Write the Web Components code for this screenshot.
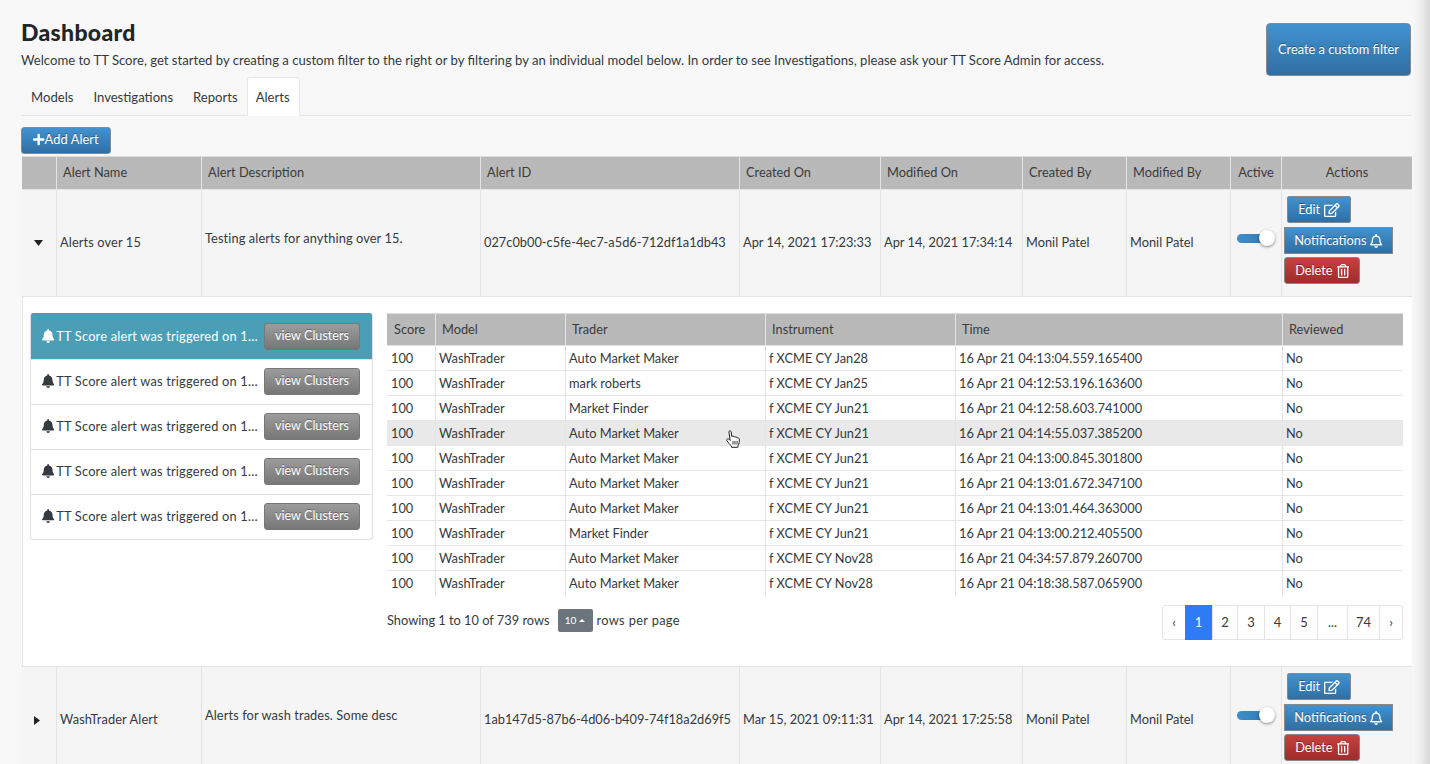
<!DOCTYPE html>
<html><head><meta charset="utf-8">
<style>
html,body{margin:0;padding:0;height:100%;overflow:hidden;background:#f8f8f8}
body{font:12.8px/1.25 Lato,"Open Sans",sans-serif;color:#343a40}
</style></head>
<body>
<tt-page id="page">
  <tt-header>
    <span slot="title">Dashboard</span>
    <span slot="lead">Welcome to TT Score, get started by creating a custom filter to the right or by filtering by an individual model below. In order to see Investigations, please ask your TT Score Admin for access.</span>
    <tt-button slot="action" size="lg">Create a custom filter</tt-button>
  </tt-header>
  <tt-tabs active="Alerts" items="Models,Investigations,Reports,Alerts"></tt-tabs>
  <tt-toolbar><tt-button size="add"><tt-icon name="plus"></tt-icon>Add Alert</tt-button></tt-toolbar>
  <tt-alert-head></tt-alert-head>
  <tt-alert-row open name="Alerts over 15" desc="Testing alerts for anything over 15." aid="027c0b00-c5fe-4ec7-a5d6-712df1a1db43" created="Apr 14, 2021 17:23:33" modified="Apr 14, 2021 17:34:14" by="Monil Patel" mby="Monil Patel"></tt-alert-row>
  <tt-detail>
    <tt-alert-list slot="list"></tt-alert-list>
    <tt-data-table slot="table"></tt-data-table>
    <tt-table-foot slot="foot"></tt-table-foot>
  </tt-detail>
  <tt-alert-row name="WashTrader Alert" desc="Alerts for wash trades. Some desc" aid="1ab147d5-87b6-4d06-b409-74f18a2d69f5" created="Mar 15, 2021 09:11:31" modified="Apr 14, 2021 17:25:58" by="Monil Patel" mby="Monil Patel"></tt-alert-row>
  <tt-cursor></tt-cursor>
</tt-page>
<script>
const ICONS={
 bell:['0 0 448 512','M224 512c35.32 0 63.97-28.65 63.97-64H160.03c0 35.35 28.65 64 63.97 64zm215.39-149.71c-19.32-20.76-55.47-51.99-55.47-154.29 0-77.7-54.48-139.9-127.94-155.16V32c0-17.67-14.32-32-31.98-32s-31.98 14.33-31.98 32v20.84C118.56 68.1 64.08 130.3 64.08 208c0 102.3-36.15 133.53-55.47 154.29-6 6.45-8.66 14.16-8.61 21.71.11 16.4 12.98 32 32.1 32h383.8c19.12 0 32-15.6 32.1-32 .05-7.55-2.61-15.27-8.61-21.71z'],
 bello:['0 0 448 512','M439.39 362.29c-19.32-20.76-55.47-51.99-55.47-154.29 0-77.7-54.48-139.9-127.94-155.16V32c0-17.67-14.32-32-31.98-32s-31.98 14.33-31.98 32v20.84C118.56 68.1 64.08 130.3 64.08 208c0 102.3-36.15 133.53-55.47 154.29-6 6.45-8.66 14.16-8.61 21.71.11 16.4 12.98 32 32.1 32h383.8c19.12 0 32-15.6 32.1-32 .05-7.55-2.61-15.27-8.61-21.71zM67.53 368c21.22-27.97 44.42-74.33 44.53-159.42 0-.2-.06-.38-.06-.58 0-61.86 50.14-112 112-112s112 50.14 112 112c0 .2-.06.38-.06.58.11 85.1 23.31 131.46 44.53 159.42H67.53zM224 512c35.32 0 63.97-28.65 63.97-64H160.03c0 35.35 28.65 64 63.97 64z'],
 edit:['0 0 576 512','M402.3 344.9l32-32c5-5 13.7-1.5 13.7 5.7V464c0 26.5-21.5 48-48 48H48c-26.5 0-48-21.5-48-48V112c0-26.5 21.5-48 48-48h273.5c7.1 0 10.7 8.6 5.7 13.7l-32 32c-1.5 1.5-3.5 2.3-5.7 2.3H48v352h352V350.5c0-2.1.8-4.1 2.3-5.6zm156.6-201.8L296.3 405.7l-90.4 10c-26.2 2.9-48.5-19.2-45.6-45.6l10-90.4L432.9 17.1c22.9-22.9 59.9-22.9 82.7 0l43.2 43.2c22.9 22.9 22.9 60 .1 82.8zM460.1 174L402 115.9 216.2 301.8l-7.3 65.3 65.3-7.3L460.1 174zm64.8-79.7l-43.2-43.2c-4.1-4.1-10.8-4.1-14.8 0L436 82l58.1 58.1 30.9-30.9c4-4.2 4-10.8-.1-14.9z'],
 trash:['0 0 448 512','M268 416h24a12 12 0 0 0 12-12V188a12 12 0 0 0-12-12h-24a12 12 0 0 0-12 12v216a12 12 0 0 0 12 12zM432 80h-82.41l-34-56.7A48 48 0 0 0 274.41 0H173.59a48 48 0 0 0-41.16 23.3L98.41 80H16A16 16 0 0 0 0 96v16a16 16 0 0 0 16 16h16v336a48 48 0 0 0 48 48h288a48 48 0 0 0 48-48V128h16a16 16 0 0 0 16-16V96a16 16 0 0 0-16-16zM171.84 50.91A6 6 0 0 1 177 48h94a6 6 0 0 1 5.15 2.91L293.61 80H154.39zM368 464H80V128h288zm-212-48h24a12 12 0 0 0 12-12V188a12 12 0 0 0-12-12h-24a12 12 0 0 0-12 12v216a12 12 0 0 0 12 12z'],
 plus:['0 0 448 512','M416 208H272V64c0-17.67-14.33-32-32-32h-32c-17.67 0-32 14.33-32 32v144H32c-17.67 0-32 14.33-32 32v32c0 17.67 14.33 32 32 32h144v144c0 17.67 14.33 32 32 32h32c17.67 0 32-14.33 32-32V304h144c17.67 0 32-14.33 32-32v-32c0-17.67-14.33-32-32-32z']
};
const FONT=`Lato,"Open Sans",sans-serif`;
function def(name,html,init){
  customElements.define(name,class extends HTMLElement{
    connectedCallback(){
      if(this.shadowRoot)return;
      const r=this.attachShadow({mode:'open'});
      r.innerHTML=typeof html==='function'?html(this):html;
      if(init)init(this,r);
    }
  });
}
def('tt-icon',h=>{const i=ICONS[h.getAttribute('name')];return `<style>:host{display:inline-flex;vertical-align:-2px}svg{display:block;height:var(--icon-h,14px);width:auto;fill:currentColor}</style><svg viewBox="${i[0]}"><path d="${i[1]}"/></svg>`});
def('tt-page',`<style>
:host{display:flex;height:764px;overflow:hidden;position:relative}
.main{width:1412px;flex:none;box-sizing:border-box;padding:0 0 0 21px;--cols:34px 145px 279px 259px 141px 142px 104px 104px 51px 131px}
.bar{flex:none;width:18px;height:100%;background:linear-gradient(90deg,#f8f8f8 0,#eeeeee 45%,#d8d8d8 100%)}
</style><div class="main"><slot></slot></div><div class="bar"></div>`);
def('tt-header',`<style>
:host{display:flex;justify-content:space-between;height:77px;box-sizing:border-box;padding-right:1px}
h1{margin:0;padding-top:19px;font-size:23px;line-height:27px;font-weight:900;color:#212529;letter-spacing:.3px}
p{margin:0;padding-top:4px;font-size:13.1px;line-height:20px;color:#343a40}
.a{padding-top:23px}
</style><div><h1><slot name="title"></slot></h1><p><slot name="lead"></slot></p></div><div class="a"><slot name="action"></slot></div>`);
def('tt-button',h=>`<style>
:host{display:inline-flex;align-items:center;justify-content:center;box-sizing:border-box;color:#fff;font:12.8px/1 ${FONT};text-shadow:0 -1px 0 rgba(0,0,0,.35);white-space:nowrap;border:1px solid #85888c;border-radius:3px;background:linear-gradient(#4292d0,#2f6fa3);gap:4px;--icon-h:14px}
:host([size=lg]){width:145px;height:53px;border-radius:4px}
:host([size=add]){width:90px;height:27px;gap:0;--icon-h:13px;border-radius:3px;padding-bottom:2px;letter-spacing:.1px}
:host([size=edit]){width:64px;height:27px;margin-left:3px;border-radius:2px}
:host([size=notif]){width:109px;height:27px;border-radius:0;margin-top:1px}
:host([size=del]){width:76px;height:27px;background:linear-gradient(#c5413e,#a12c2a)}
:host([size=view]){flex:none;width:96px;height:27px;background:linear-gradient(#9c9c9c,#777);border-color:#777;border-radius:3px;font-size:12.6px}
</style><slot></slot>`);
def('tt-tabs',h=>{
 const a=h.getAttribute('active');
 return `<style>
:host{display:flex;height:39px;box-sizing:border-box;border-bottom:1px solid #e4e4e4}
a{box-sizing:border-box;height:39px;padding:12px 10px 0;font-size:13.1px;line-height:17px;color:#343a40}
a.on{background:#fff;border:1px solid #e8e8e8;border-bottom:0;border-radius:3px 3px 0 0;padding:11px 8px 0;width:53px;margin-left:-1px}
</style>`+h.getAttribute('items').split(',').map(t=>`<a class="${t===a?'on':''}">${t}</a>`).join('');
});
def('tt-toolbar',`<style>:host{display:flex;padding-top:11px;height:40px;box-sizing:border-box}</style><slot></slot>`);
const CELL=`:host{display:grid;grid-template-columns:var(--cols);margin-left:1px;width:1390px;box-sizing:border-box}`;
def('tt-alert-head',`<style>${CELL}
:host{height:34px;background:#b9b9b9;border-top:1px solid #ddd;border-bottom:1px solid #e2e2e8;font-size:12.8px;color:#3b3b3b}
div{border-left:1px solid #e3e3e8;padding:7px 0 0 6px;line-height:17px;box-sizing:border-box}
div:first-of-type{border-left:0}
.c{padding-left:0;text-align:center}
</style><div></div><div>Alert Name</div><div>Alert Description</div><div>Alert ID</div><div>Created On</div><div>Modified On</div><div>Created By</div><div>Modified By</div><div class="c">Active</div><div class="c">Actions</div>`);
def('tt-toggle',`<style>:host{display:block;position:relative;width:39px;height:17px}
.t{position:absolute;left:0;top:4px;width:34px;height:9px;border-radius:5px;background:linear-gradient(90deg,#3f8fcb,#2f75ad)}
.k{position:absolute;left:22px;top:0;width:16px;height:16px;border-radius:50%;background:#fff;box-shadow:0 1px 3px rgba(0,0,0,.45)}
</style><div class="t"></div><div class="k"></div>`);
def('tt-alert-row',h=>{
 const g=n=>h.getAttribute(n), open=h.hasAttribute('open');
 const caret=open?`<svg width="9" height="6" viewBox="0 0 9 6"><path d="M0 0h9L4.500 6z" fill="#222"/></svg>`:`<svg width="6" height="9" viewBox="0 0 6 9"><path d="M0 0v9l6-4.500z" fill="#222"/></svg>`;
 return `<style>${CELL}
:host{height:107px;background:#f5f5f5;border-bottom:1px solid #e4e4ea;font-size:12.8px;color:#343a40}
.c{border-left:1px solid #e3e3e8;padding:0 0 2px 3px;display:flex;align-items:center;white-space:nowrap;box-sizing:border-box;min-width:0}
.c:first-of-type{border-left:0;padding:0 0 0 12px}
.n{letter-spacing:.12px}
.d{padding-left:3px;padding-bottom:10px;letter-spacing:.1px}
.tg{padding:0 0 10px 6px}
.ac{display:flex;flex-direction:column;align-items:flex-start;gap:3px;padding:6px 0 0 2px;justify-content:flex-start}
</style>
<div class="c">${caret}</div><div class="c n">${g('name')}</div><div class="c d">${g('desc')}</div><div class="c">${g('aid')}</div><div class="c">${g('created')}</div><div class="c">${g('modified')}</div><div class="c">${g('by')}</div><div class="c">${g('mby')}</div>
<div class="c tg"><tt-toggle></tt-toggle></div>
<div class="c ac"><tt-button size="edit">Edit <tt-icon name="edit"></tt-icon></tt-button><tt-button size="notif">Notifications <tt-icon name="bello"></tt-icon></tt-button><tt-button size="del">Delete <tt-icon name="trash"></tt-icon></tt-button></div>`;
});
def('tt-detail',`<style>
:host{display:grid;grid-template-columns:343px 1016px;column-gap:14px;margin-left:1px;width:1390px;height:370px;box-sizing:border-box;background:#fff;padding:16px 0 0 7px;align-items:start;align-content:start;border-left:1px solid #e3e3e8;border-bottom:1px solid #e4e4ea}
.l{grid-row:1/3}
</style><div class="l"><slot name="list"></slot></div><slot name="table"></slot><slot name="foot"></slot>`);
def('tt-alert-list',`<style>
:host{display:block;border:1px solid #e1e1e6;border-top:0;border-radius:3px;overflow:hidden;width:343px;box-sizing:border-box}
.i{display:flex;align-items:center;height:45px;box-sizing:border-box;padding:0 12px 2px 11px;border-top:1px solid #e1e1e6;font-size:12.8px;color:#343a40;gap:5px}
.i.on{background:#4a9fb6;color:#fff;margin:0 -1px;padding:0 13px 0 12px;border-top:0;height:46px}
.i span{flex:1;min-width:0;white-space:nowrap;letter-spacing:.2px}
tt-icon{--icon-h:14px;margin-right:-3px}
</style>`+[1,2,3,4,5].map((n,i)=>`<div class="i ${i?'':'on'}"><tt-icon name="bell"></tt-icon><span>TT Score alert was triggered on 1…</span><tt-button size="view">view Clusters</tt-button></div>`).join(''));
const ROWS=[['Auto Market Maker','f XCME CY Jan28','16 Apr 21 04:13:04.559.165400'],['mark roberts','f XCME CY Jan25','16 Apr 21 04:12:53.196.163600'],['Market Finder','f XCME CY Jun21','16 Apr 21 04:12:58.603.741000'],['Auto Market Maker','f XCME CY Jun21','16 Apr 21 04:14:55.037.385200'],['Auto Market Maker','f XCME CY Jun21','16 Apr 21 04:13:00.845.301800'],['Auto Market Maker','f XCME CY Jun21','16 Apr 21 04:13:01.672.347100'],['Auto Market Maker','f XCME CY Jun21','16 Apr 21 04:13:01.464.363000'],['Market Finder','f XCME CY Jun21','16 Apr 21 04:13:00.212.405500'],['Auto Market Maker','f XCME CY Nov28','16 Apr 21 04:34:57.879.260700'],['Auto Market Maker','f XCME CY Nov28','16 Apr 21 04:18:38.587.065900']];
def('tt-data-table',`<style>
:host{display:block;width:1016px;font-size:12.8px;color:#343a40;--c:48px 130px 200px 190px 327px 121px}
.r{display:grid;grid-template-columns:var(--c);height:25px;box-sizing:border-box;border-bottom:1px solid #e5e5ea}
.r:last-child{border-bottom:0}
.r.hv{background:#e9e9e9}
.r div{border-left:1px solid #e3e3e8;padding:4px 0 0 3px;line-height:17px;white-space:nowrap}
.r div:first-child{border-left:0;padding-left:4px}
.h{display:grid;grid-template-columns:var(--c);height:33px;background:#b9b9b9;box-sizing:border-box;border-top:1px solid #ddd;border-bottom:1px solid #e2e2e8;color:#3b3b3b}
.h div{border-left:1px solid #e3e3e8;padding:7px 0 0 6px;line-height:17px}
.h div:first-child{border-left:0;padding-left:7px}
</style><div class="h"><div>Score</div><div>Model</div><div>Trader</div><div>Instrument</div><div>Time</div><div>Reviewed</div></div>`+ROWS.map((r,i)=>`<div class="r ${i==3?'hv':''}"><div>100</div><div>WashTrader</div><div>${r[0]}</div><div>${r[1]}</div><div>${r[2]}</div><div>No</div></div>`).join(''));
def('tt-table-foot',`<style>
:host{display:flex;justify-content:space-between;align-items:flex-start;width:1016px;font-size:12.8px;color:#343a40;padding-top:9px}
.s{display:flex;align-items:center;padding-top:4px}
.s span:not(.dd){margin-top:-2px}
.s span:last-child{letter-spacing:.35px}
.dd{display:inline-flex;align-items:center;justify-content:center;gap:3px;width:35px;height:23px;border-radius:2px;background:#6c757d;color:#fff;font-size:10px;margin:0 4px 0 8px}
.dd i{width:0;height:0;border:3px solid transparent;border-bottom:3px solid #fff;border-top:0;display:block}
</style><div class="s"><span>Showing 1 to 10 of 739 rows</span><span class="dd">10 <i></i></span><span>rows per page</span></div><tt-pagination></tt-pagination>`);
def('tt-pagination',`<style>
:host{display:grid;grid-template-columns:22px 27px 25px 27px 26px 27px 30px 32px 23px;height:35px;box-sizing:border-box;border:1px solid #e3e3e8;border-radius:3px;font-size:13px;color:#343a40;background:#fff}
a{display:flex;align-items:center;justify-content:center;border-left:1px solid #e3e3e8}
a:first-of-type{border-left:0}
a.on{background:#2f7bf6;color:#fff;border-left:0;margin:-1px 0}
</style><a>‹</a><a class="on">1</a><a>2</a><a>3</a><a>4</a><a>5</a><a>...</a><a>74</a><a>›</a>`);
def('tt-cursor',`<style>:host{position:absolute;left:726px;top:430px;width:15px;height:19px;display:block}svg{display:block}</style>
<svg width="15" height="19" viewBox="0 0 15 19"><path d="M3 1.300c.9-.9 2-.4 2.200.7l.6 4.500 1-.3c.7-.1 1.200.2 1.400.6.6-.3 1.400-.1 1.700.5.7-.3 1.400 0 1.700.6.9-.2 1.600.4 1.700 1.200.2 2.400-.1 4.600-1.200 6.400l-.3 1.800H5.600l-.4-1.600C3.800 14.600 2.300 12.600 1 10.800c-.5-.8-.2-1.700.6-1.900.6-.2 1.200.1 1.700.6l.9 1L3.100 3c-.2-.7-.4-1.200-.1-1.700z" fill="#fff" stroke="#222" stroke-width="1"/><path d="M7 11v3.500M9 11v3.500M11 11v3.500" stroke="#222" stroke-width=".9" fill="none"/></svg>`);
</script>
</body></html>
